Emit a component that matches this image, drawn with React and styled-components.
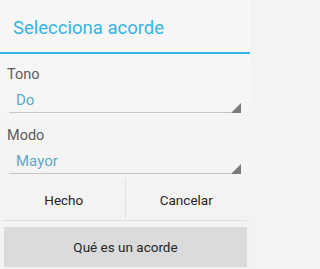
import styled, { createGlobalStyle } from "styled-components";

const GlobalStyle = createGlobalStyle`
  html, body {
    margin: 0;
    padding: 0;
    background: #f3f3f3;
  }
  * {
    box-sizing: border-box;
  }
`;

const Dialog = styled.div`
  width: 250px;
  height: 269px;
  background: linear-gradient(#f7f7f7, #f2f2f2);
  font-family: Roboto, "Liberation Sans", sans-serif;
  display: flex;
  flex-direction: column;
  overflow: hidden;
`;

const Title = styled.div`
  height: 54px;
  padding: 16.5px 0 0 13px;
  font-size: 18.5px;
  line-height: 22px;
  color: #33b5e5;
  border-bottom: 2px solid #33b5e5;
`;

const Form = styled.div`
  display: flex;
  flex-direction: column;
  gap: 13.5px;
  padding: 12px 9px 0 7px;
`;

const Field = styled.div`
  display: flex;
  flex-direction: column;
`;

const Label = styled.div`
  font-size: 14.5px;
  line-height: 18px;
  color: #5c5c5c;
`;

const Spinner = styled.div`
  display: flex;
  align-items: flex-end;
  margin-left: 2px;
`;

const Value = styled.div`
  flex: 1;
  padding: 6px 0 2px 7px;
  font-size: 15px;
  line-height: 20px;
  color: #5ea8ca;
  border-bottom: 1px solid #c6c6c6;
`;

const Corner = styled.svg`
  display: block;
  width: 10px;
  height: 10px;
  flex: none;
`;

const ButtonRow = styled.div`
  display: flex;
  margin: 1px 3px 0;
  border-bottom: 1px solid #e1e1e1;
`;

const FlatButton = styled.div`
  flex: 1;
  height: 45px;
  padding-top: 15px;
  text-align: center;
  font-size: 13.5px;
  line-height: 20px;
  color: #262626;
`;

const Divider = styled.div`
  width: 1px;
  margin: 3px 0 1px;
  background: #e1e1e1;
`;

const GrayButton = styled.div`
  margin: 6px 3px 0 4px;
  height: 40px;
  padding-top: 10px;
  background: #dbdbdb;
  text-align: center;
  font-size: 13.5px;
  line-height: 20px;
  color: #262626;
`;

function Select({ value }) {
  return (
    <Spinner>
      <Value>{value}</Value>
      <Corner viewBox="0 0 10 10">
        <polygon points="10,0 10,10 0,10" fill="#7a7a7a" />
      </Corner>
    </Spinner>
  );
}

export default function App() {
  return (
    <>
      <GlobalStyle />
      <Dialog>
        <Title>Selecciona acorde</Title>
        <Form>
          <Field>
            <Label>Tono</Label>
            <Select value="Do" />
          </Field>
          <Field>
            <Label>Modo</Label>
            <Select value="Mayor" />
          </Field>
        </Form>
        <ButtonRow>
          <FlatButton>Hecho</FlatButton>
          <Divider />
          <FlatButton>Cancelar</FlatButton>
        </ButtonRow>
        <GrayButton>Qué es un acorde</GrayButton>
      </Dialog>
    </>
  );
}
